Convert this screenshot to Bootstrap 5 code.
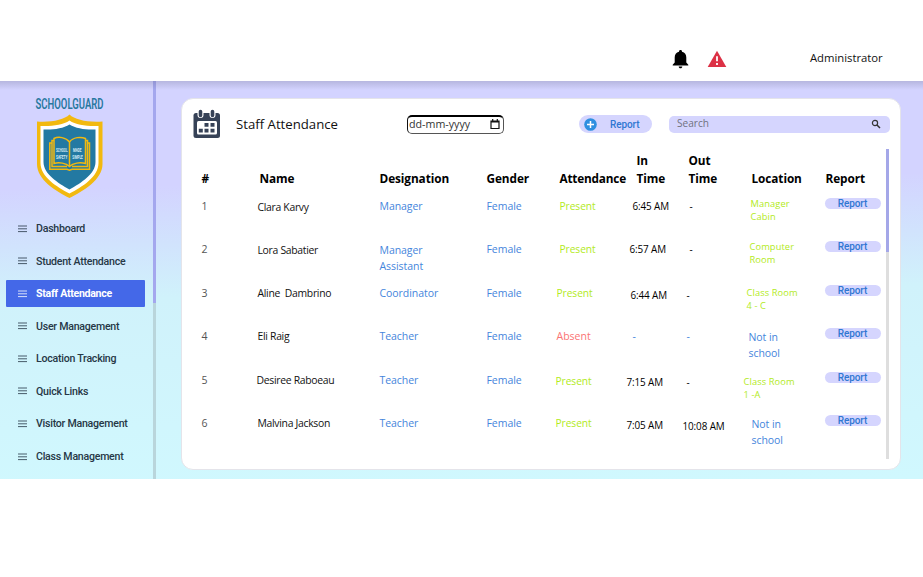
<!DOCTYPE html>
<html lang="en">
<head>
<meta charset="utf-8">
<meta name="viewport" content="width=device-width, initial-scale=1">
<title>SchoolGuard - Staff Attendance</title>
<link href="https://cdn.jsdelivr.net/npm/bootstrap@5.3.0/dist/css/bootstrap.min.css" rel="stylesheet">
<style>
body{font-family:"Open Sans","Noto Sans",sans-serif;background:#fff;color:#111;font-size:10.5px;overflow:hidden;height:577px}
svg{display:block;flex:none}
.topbar{height:81px;padding:34px 38px 0 672px}
.topbar .who{font-size:11.3px;margin-left:81px;color:#111;font-weight:500;letter-spacing:-.02px}
.shell{height:398px;background:linear-gradient(179deg,#d3d3ff 0,#d3d3ff 26%,#d1e3fd 40%,#d0f2fb 53%,#d0f8fe 100%)}
.shade{height:9px;margin-bottom:-9px;background:linear-gradient(rgba(80,80,110,.22),rgba(80,80,110,0));position:relative}
.side{width:153px;padding:15px 0 0 6px;flex:none}
.brand{margin-left:28px;overflow:visible}
.side .nav{margin-top:16.300px}
.side .nav-link{height:27px;margin-bottom:5.54px;padding:0 0 0 12px;width:139px;border-radius:1px;font:500 10.6px/27px Roboto,sans-serif;letter-spacing:-.25px;color:#263746;white-space:nowrap}
.side .nav-link svg{margin-right:9px}
.side .nav-link.active{background:#4468e8;color:#fff;font-weight:700;letter-spacing:-.3px}
.vbar{width:3px;background:#b9d5db;flex:none}
.vbar div{height:222px;background:#a4a7ee}
.panel{margin:17px 22px 9px 25px;width:720px;height:372px;border:1px solid #e4e4ea;border-radius:12px;background:#fff;flex:none}
.tools{height:50px;padding-left:11px}
.title{font-size:13.2px;font-weight:500;margin-left:15px;padding-top:1px;width:171px;color:#111}
.datebox{width:97px;height:19px;border:1.5px solid #555;border-top:2px solid #000;border-left-color:#111;border-radius:5px;padding:0 3px 0 1px;font-size:10.7px;color:#333}
.addbtn{width:73px;height:18px;border-radius:9px;margin-left:75px;background:#d5d5fe;padding-left:5px}
.rep{font-family:Roboto,sans-serif;font-weight:500;color:#2f77d2;font-size:10px;letter-spacing:-.1px}
.addbtn .rep{margin-left:13px}
.finder{width:221px;height:17px;border-radius:5px;background:#d5d5fe;margin-left:17px;padding:0 9px 0 8px;font-size:10.1px;color:#70727f}
.listing{width:704px;height:310px}
.line{display:grid;grid-template-columns:54px 124px 107px 69px 71px 56px 60px 82px 57px;padding-left:19.500px;height:43.45px;align-items:start;line-height:17px;white-space:nowrap}
.line.heads{height:49px;font-weight:700;font-size:11.8px;letter-spacing:-.08px;line-height:18px;align-items:end;padding-bottom:11px;color:#000}
.heads .h-name{padding-left:4px}.heads .h-att{padding-left:4px;letter-spacing:-.2px}.heads .h-in{padding-left:10px}.heads .h-out{padding-left:6px}.heads .h-loc{padding-left:9px}.heads .h-rep{padding-left:1px}
.num{color:#555}
.person{color:#111;font-size:10.4px;letter-spacing:-.3px;padding:1px 0 0 2px;white-space:pre;font-weight:500}
.blue{color:#4585dc;letter-spacing:-.05px}
.blue.pair{line-height:16px;padding-top:.6px}
.here{color:#b2ea22;font-size:10.2px;font-weight:500;letter-spacing:-.05px}
.away{color:#fb7373}
.clock{color:#000;font-size:9.9px;font-weight:500;letter-spacing:-.1px}
.place{color:#b2ea22;font-size:9.3px;font-weight:500;letter-spacing:.1px;line-height:13px;margin-top:-1px}
.pill{width:56px;height:11px;line-height:11px;border-radius:6px;background:#d5d5fe;text-align:center}
.l1{padding-left:1px}.l3{padding-left:3px}.l4{padding-left:4px}.l6{padding-left:6px}.l7{padding-left:7px}.l8{padding-left:8px}.l9{padding-left:9px}
.t0{padding-top:0}.t1{padding-top:1px}.t2{padding-top:2px}.t3{padding-top:3px}
.tbar{width:3px;background:#dedede;height:310px}
.tbar div{height:103px;background:#a4a7e8}
</style>
</head>
<body>
<svg width="0" height="0" class="d-none"><symbol id="bars" viewBox="0 0 9 8"><path d="M0 1h9M0 3.8h9M0 6.6h9" stroke="currentColor" stroke-width="1" opacity=".8"/></symbol></svg>
<header class="topbar d-flex align-items-start">
  <svg class="mt-3" width="17" height="19" viewBox="0 0 17 19"><path d="M8.500 0c1 0 1.500.7 1.500 1.700 2.900.7 4.300 2.900 4.300 5.700v5l2 2.400v.8H.7v-.8l2-2.400v-5C2.700 4.600 4.100 2.400 7 1.700 7 .7 7.500 0 8.500 0zM6.700 16.500h3.600c0 1.100-.8 1.800-1.800 1.800s-1.800-.7-1.800-1.800z" fill="#000"/></svg>
  <svg class="mt-3 ms-3" width="24" height="18" viewBox="-3 0 24 18"><path d="M9 .7 18.300 17H-.3z" fill="#dc3145"/><path d="M9 6.300v5M9 13v2" stroke="#fff" stroke-width="1.800"/></svg>
  <span class="who mt-3">Administrator</span>
</header>
<div class="shade"></div>
<div class="shell d-flex">
  <aside class="side">
    <svg class="brand" width="72" height="103" viewBox="34 96 72 103">
      <text x="35.500" y="109" font-family="Roboto" font-size="14.500" fill="#27789e" font-weight="600" textLength="68" lengthAdjust="spacingAndGlyphs">SCHOOLGUARD</text>
      <path d="M69.500 114.500C75 120 88 122.500 102.500 121.500V164C102.500 180 83 191 69.500 198 56 191 37 180 37 164V121.500C51 122.500 64 120 69.500 114.500z" fill="#f2b90f"/>
      <path d="M69.500 120.500C76 125 87 126.500 98.500 126V163C98.500 177 82 187 69.500 193.500 57 187 40.500 177 40.500 163V126C52 126.500 63 125 69.500 120.500z" fill="#fff"/>
      <path d="M69.500 124.500C76 128.500 86 130 95.500 129.500V162C95.500 174 81 183 69.500 189.500 58 183 43.500 174 43.500 162V129.500C53 130 63 128.500 69.500 124.500z" fill="#2379a2"/>
      <path d="M69.500 142C66 137 58 136.500 54 138.500V163.500C59 162 66 163 69.500 166.500 73 163 80 162 85.500 163.500V138.500C81 136.500 73 137 69.500 142V166M54 140.500h-2v26h15M85.500 140.500h2v26H72M52 143h-2.200v26.200H67l2.500 1 2.500-1H89.500V143h-2.200" fill="none" stroke="#f2b90f" stroke-width="1.500"/>
      <g font-family="Roboto" font-size="4.600" font-weight="700" fill="#d8edf5"><text x="56" y="152" textLength="11.500" lengthAdjust="spacingAndGlyphs">SCHOOL</text><text x="56" y="158.500" textLength="11.500" lengthAdjust="spacingAndGlyphs">SAFETY</text><text x="73" y="152" textLength="8.500" lengthAdjust="spacingAndGlyphs">MADE</text><text x="72.300" y="158.500" textLength="10.500" lengthAdjust="spacingAndGlyphs">SIMPLE</text></g>
    </svg>
    <nav class="nav flex-column">
      <a class="nav-link d-flex align-items-center"><svg width="9" height="8"><use href="#bars"/></svg>Dashboard</a>
      <a class="nav-link d-flex align-items-center"><svg width="9" height="8"><use href="#bars"/></svg>Student Attendance</a>
      <a class="nav-link active d-flex align-items-center"><svg width="9" height="8"><use href="#bars"/></svg>Staff Attendance</a>
      <a class="nav-link d-flex align-items-center"><svg width="9" height="8"><use href="#bars"/></svg>User Management</a>
      <a class="nav-link d-flex align-items-center"><svg width="9" height="8"><use href="#bars"/></svg>Location Tracking</a>
      <a class="nav-link d-flex align-items-center"><svg width="9" height="8"><use href="#bars"/></svg>Quick Links</a>
      <a class="nav-link d-flex align-items-center"><svg width="9" height="8"><use href="#bars"/></svg>Visitor Management</a>
      <a class="nav-link d-flex align-items-center"><svg width="9" height="8"><use href="#bars"/></svg>Class Management</a>
    </nav>
  </aside>
  <div class="vbar"><div></div></div>
  <main class="panel">
    <div class="tools d-flex align-items-center">
      <svg width="28" height="30" viewBox="0 0 28 30"><rect x=".5" y="4" width="26.500" height="25" rx="2.500" fill="#364257"/><rect x="4" y="12" width="20" height="13.500" rx="1.500" fill="#fff"/><g stroke="#fff" stroke-width="6" stroke-linecap="round"><path d="M7.500 3v3M19.500 3v3"/></g><g stroke="#364257" stroke-width="3.600" stroke-linecap="round"><path d="M7.500 2.500v4M19.500 2.500v4"/></g><path d="M11.500 14h4v3.800h-4zM17.500 14h4v3.800h-4zM5.800 19.800h4v3.600h-4zM11.500 19.800h4v3.600h-4zM17.500 19.800h4v3.600h-4z" fill="#364257"/></svg>
      <span class="title">Staff Attendance</span>
      <div class="datebox d-flex align-items-center justify-content-between"><span>dd-mm-yyyy</span><svg width="10" height="11" viewBox="0 0 10 11"><path d="M1 2h8v7.500H1zM1 3h8M2.700 0v2M7.300 0v2" fill="none" stroke="#111" stroke-width="1.200"/></svg></div>
      <div class="addbtn d-flex align-items-center"><svg width="13" height="13" viewBox="0 0 13 13"><circle cx="6.500" cy="6.500" r="6.300" fill="#2f8fe0"/><path d="M6.500 3v7M3 6.500h7" stroke="#fff" stroke-width="1.500"/></svg><span class="rep">Report</span></div>
      <div class="finder d-flex align-items-center justify-content-between"><span>Search</span><svg width="10" height="10" viewBox="0 0 10 10"><circle cx="4" cy="4" r="2.600" fill="none" stroke="#333" stroke-width="1.200"/><path d="M6 6l3 3" stroke="#333" stroke-width="1.500"/></svg></div>
    </div>
    <div class="d-flex">
      <div class="listing">
        <div class="line heads"><div>#</div><div class="h-name">Name</div><div>Designation</div><div>Gender</div><div class="h-att">Attendance</div><div class="h-in">In<br>Time</div><div class="h-out">Out<br>Time</div><div class="h-loc">Location</div><div class="h-rep">Report</div></div>
        <div class="line"><div class="num">1</div><div class="person t1">Clara Karvy</div><div class="blue">Manager</div><div class="blue">Female</div><div class="here l4">Present</div><div class="clock l6">6:45 AM</div><div class="clock l7">-</div><div class="place l8">Manager<br>Cabin</div><div class="rep pill">Report</div></div>
        <div class="line"><div class="num">2</div><div class="person">Lora Sabatier</div><div class="blue pair">Manager<br>Assistant</div><div class="blue">Female</div><div class="here l4">Present</div><div class="clock l3">6:57 AM</div><div class="clock l7">-</div><div class="place l7">Computer<br>Room</div><div class="rep pill">Report</div></div>
        <div class="line"><div class="num">3</div><div class="person t0">Aline  Dambrino</div><div class="blue">Coordinator</div><div class="blue">Female</div><div class="here l1">Present</div><div class="clock l4 t2">6:44 AM</div><div class="clock l4 t2">-</div><div class="place l4 t2">Class Room<br>4 - C</div><div class="rep pill">Report</div></div>
        <div class="line"><div class="num">4</div><div class="person t0">Eli Raig</div><div class="blue">Teacher</div><div class="blue">Female</div><div class="away l1">Absent</div><div class="blue l6">-</div><div class="blue l4">-</div><div class="blue pair l6">Not in<br>school</div><div class="rep pill">Report</div></div>
        <div class="line"><div class="num">5</div><div class="person t0 l1">Desiree Raboeau</div><div class="blue">Teacher</div><div class="blue">Female</div><div class="here t1">Present</div><div class="clock t2">7:15 AM</div><div class="clock l4 t2">-</div><div class="place l1 t4 pt-1">Class Room<br>1 -A</div><div class="rep pill">Report</div></div>
        <div class="line"><div class="num">6</div><div class="person t0">Malvina Jackson</div><div class="blue">Teacher</div><div class="blue">Female</div><div class="here">Present</div><div class="clock t2">7:05 AM</div><div class="clock t3">10:08 AM</div><div class="blue pair l9">Not in<br>school</div><div class="rep pill">Report</div></div>
      </div>
      <div class="tbar"><div></div></div>
    </div>
  </main>
</div>
<script src="https://cdn.jsdelivr.net/npm/bootstrap@5.3.0/dist/js/bootstrap.bundle.min.js"></script>
</body>
</html>
